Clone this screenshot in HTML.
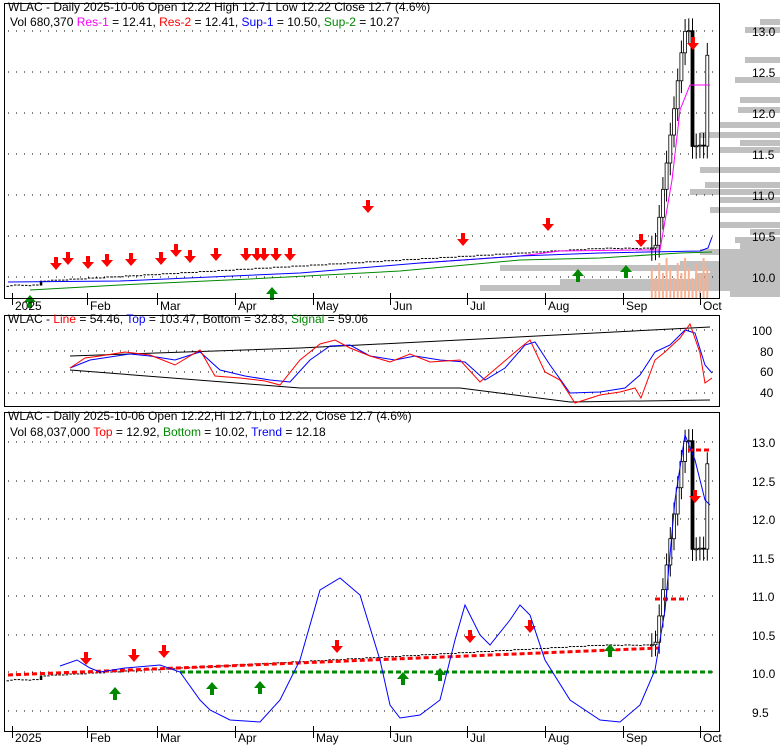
<!DOCTYPE html><html><head><style>body{margin:0;background:#fff}svg{display:block}text{font-family:"Liberation Sans",sans-serif;font-size:12px}</style></head><body>
<svg id="s" width="780" height="745" xmlns="http://www.w3.org/2000/svg">
<g id="vp" fill="#c0c0c0"></g>
<g id="grid" fill="none" stroke="#000" stroke-width="1" stroke-dasharray="1,7"></g>
<g id="p1"></g><g id="p3"></g>
<g fill="none" stroke="#000">
<rect x="4.5" y="3.5" width="715" height="295"/>
<rect x="4.5" y="315.5" width="715" height="91"/>
<rect x="4.5" y="412.5" width="715" height="319"/>
</g>
<g id="ticks" stroke="#000"></g>
<g font-size="13">
<text x="752" y="36" fill="#000">13.0</text><text x="752" y="77">12.5</text><text x="752" y="118">12.0</text><text x="752" y="159">11.5</text><text x="752" y="200">11.0</text><text x="752" y="241">10.5</text><text x="752" y="282">10.0</text>
<text x="752" y="335">100</text><text x="760" y="356">80</text><text x="760" y="376">60</text><text x="760" y="397">40</text>
<text x="752" y="447">13.0</text><text x="752" y="486">12.5</text><text x="752" y="524">12.0</text><text x="752" y="563">11.5</text><text x="752" y="601">11.0</text><text x="752" y="640">10.5</text><text x="752" y="678">10.0</text><text x="752" y="717">9.5</text>
</g>
<g id="xl"></g>
<polyline fill="none" stroke="#000" points="70,356 300,348 460,340 710,327"/>
<polyline fill="none" stroke="#000" points="70,370 300,388 460,388 570,402 710,400"/>
<polyline fill="none" stroke="#00f" points="70,368 90,360 110,357 130,354 150,356 175,360 200,352 220,370 245,376 270,380 290,382 310,360 330,346 350,345 370,356 395,360 415,356 440,360 465,362 485,380 505,368 525,345 535,342 550,365 570,393 600,392 625,388 640,375 655,352 670,345 685,330 695,333 705,365 712,373"/>
<polyline fill="none" stroke="#f00" points="70,368 85,358 100,356 125,352 150,355 175,365 200,350 215,376 240,378 265,381 280,385 300,360 320,344 335,340 350,348 370,356 390,362 410,354 430,362 460,360 480,382 500,365 520,348 530,340 545,372 560,380 575,403 600,395 620,392 635,388 641,398 655,360 665,352 680,338 690,324 700,353 705,383 712,378"/>
<polyline fill="none" stroke="#00f" points="60,666 77,660 90,668 100,672 125,668 160,665 180,672 200,700 210,710 230,720 260,722 280,700 300,660 320,590 340,578 360,595 380,660 390,705 400,718 420,715 440,700 455,640 465,605 480,635 490,645 510,620 520,605 530,615 545,660 570,700 600,720 620,722 640,705 655,670 665,610 675,500 685,435 695,460 705,500 710,505"/>
<g>
<text x="8" y="11" fill="#000">WLAC - Daily 2025-10-06 Open 12.22  High 12.71  Low 12.22  Close 12.7 (4.6%)</text>
<text x="10" y="26">Vol 680,370 <tspan fill="#f0f">Res-1</tspan> = 12.41, <tspan fill="#f00">Res-2</tspan> = 12.41, <tspan fill="#00f">Sup-1</tspan> = 10.50, <tspan fill="#080">Sup-2</tspan> = 10.27</text>
<text x="8" y="323">WLAC - <tspan fill="#f00">Line</tspan> = 54.46, <tspan fill="#00f">Top</tspan> = 103.47, <tspan fill="#000">Bottom</tspan> = 32.83, <tspan fill="#080">Signal</tspan> = 59.06</text>
<text x="8" y="420">WLAC - Daily 2025-10-06 Open 12.22,Hi 12.71,Lo 12.22, Close 12.7 (4.6%)</text>
<text x="10" y="436">Vol 68,037,000 <tspan fill="#f00">Top</tspan> = 12.92, <tspan fill="#080">Bottom</tspan> = 10.02, <tspan fill="#00f">Trend</tspan> = 12.18</text>
</g>
</svg>
<script>
var S="http://www.w3.org/2000/svg";
function el(p,t,a){var e=document.createElementNS(S,t);for(var k in a)e.setAttribute(k,a[k]);document.getElementById(p).appendChild(e);return e}
[31,72,113,154,195,236,277].forEach(y=>el("grid","line",{x1:8,x2:719,y1:y,y2:y}));
[330,351,372,393].forEach(y=>el("grid","line",{x1:8,x2:719,y1:y,y2:y}));
[442,481,519,558,596,635,672,711].forEach(y=>el("grid","line",{x1:8,x2:719,y1:y,y2:y}));
var xs=[[12,"2025"],[87,"Feb"],[157,"Mar"],[235,"Apr"],[313,"May"],[390,"Jun"],[467,"Jul"],[545,"Aug"],[623,"Sep"],[700,"Oct"]];
xs.forEach(a=>{[[298,310],[731,742]].forEach(b=>{el("ticks","line",{x1:a[0]+.5,x2:a[0]+.5,y1:b[0]-5,y2:b[0]+7});var t=el("xl","text",{x:a[0]+3,y:b[1],"font-size":"13"});t.textContent=a[1];});});
// volume profile
var vp=[[22,20],[30,35],[60,35],[80,45],[100,40],[110,42],[125,60],[135,80],[143,40],[150,60],[170,80],[185,75],[192,90],[200,60],[210,70],[225,60],[232,30],[240,45],[246,40],[252,80],[258,60],[264,100],[268,280],[272,70],[276,85],[282,220],[288,300],[294,50]];
vp.forEach(a=>el("vp","rect",{x:780-a[1],y:a[0]-3,width:a[1],height:6}));
function price(i){var x=8+i*3.7;var p;
 if(x<40)p=9.9;else if(x<600)p=9.95+(x-40)/560*0.4;else if(x<655)p=10.35;
 else if(x<685)p=10.35+(x-655)/30*2.7;else if(x<692)p=13.0;else if(x<705)p=11.6;else p=12.7;
 return {x:x,p:p+((i*37)%5-2)*0.004}}
var n=190,pr=[];for(var i=0;i<n;i++){var q=price(i);if(q.x<=711)pr.push(q)}
function y1(p){return 277-(p-10)*82}function y3(p){return 672-(p-10)*77}
pr.forEach((q,i)=>{var o=i?pr[i-1].p:q.p,c=q.p,up=c>=o;var big=q.x>650;var hi=Math.max(o,c)+(big?0.15:0.01),lo=Math.min(o,c)-(big?0.15:0.01);
[["p1",y1],["p3",y3]].forEach(g=>{var f=g[1];if(big)el(g[0],"line",{x1:q.x,x2:q.x,y1:f(hi),y2:f(lo),stroke:"#000"});
 var h=Math.max(1,Math.abs(f(o)-f(c)));el(g[0],"rect",{x:q.x-1.5,y:Math.min(f(o),f(c)),width:big?3:2.5,height:h,fill:(up&&big)?"#fff":"#000",stroke:big?"#000":"none","stroke-width":0.8});});
 if(q.x>650){var vh=20+((i*13)%5)*5;el("p1","rect",{x:q.x-1,y:298-vh,width:2,height:vh,fill:"#f8b090"});}
});
function pl(g,pts,c){el(g,"polyline",{points:pts,fill:"none",stroke:c})}
pl("p1","420,263 520,256 560,251 640,250 660,250 672,180 680,110 690,85 710,85","#f0f");
pl("p1","8,282 120,281 300,273 420,263 520,256 600,253 700,251 708,248 712,237","#00f");
pl("p1","30,290 120,285 250,279 400,271 520,260 600,258 680,253 712,252","#080");
el("p3","line",{x1:180,x2:712,y1:672,y2:672,stroke:"#080","stroke-width":3,"stroke-dasharray":"5,3"});
el("p3","line",{x1:8,x2:660,y1:675,y2:648,stroke:"#f00","stroke-width":3,"stroke-dasharray":"5,3"});
el("p3","line",{x1:655,x2:688,y1:599,y2:599,stroke:"#f00","stroke-width":3,"stroke-dasharray":"5,3"});
el("p3","line",{x1:688,x2:712,y1:450,y2:450,stroke:"#f00","stroke-width":3,"stroke-dasharray":"5,3"});
function dn(g,x,y){el(g,"path",{d:`M${x-2},${y-10}h4v6h4l-6,7l-6,-7h4z`,fill:"#f00"})}
function up(g,x,y){el(g,"path",{d:`M${x-2},${y+10}h4v-6h4l-6,-7l-6,7h4z`,fill:"#080"})}
[[56,267],[68,262],[88,266],[107,264],[131,263],[161,262],[176,254],[190,260],[216,258],[246,258],[257,258],[264,258],[276,258],[290,258],[368,210],[463,243],[548,228],[641,244],[693,47]].forEach(a=>dn("p1",a[0],a[1]));
[[30,298],[272,290],[578,272],[626,268]].forEach(a=>up("p1",a[0],a[1]));
[[86,662],[134,659],[164,655],[337,650],[470,640],[530,630],[695,500]].forEach(a=>dn("p3",a[0],a[1]));
[[115,690],[212,685],[260,684],[403,675],[440,671],[610,647]].forEach(a=>up("p3",a[0],a[1]));
</script>
</body></html>
